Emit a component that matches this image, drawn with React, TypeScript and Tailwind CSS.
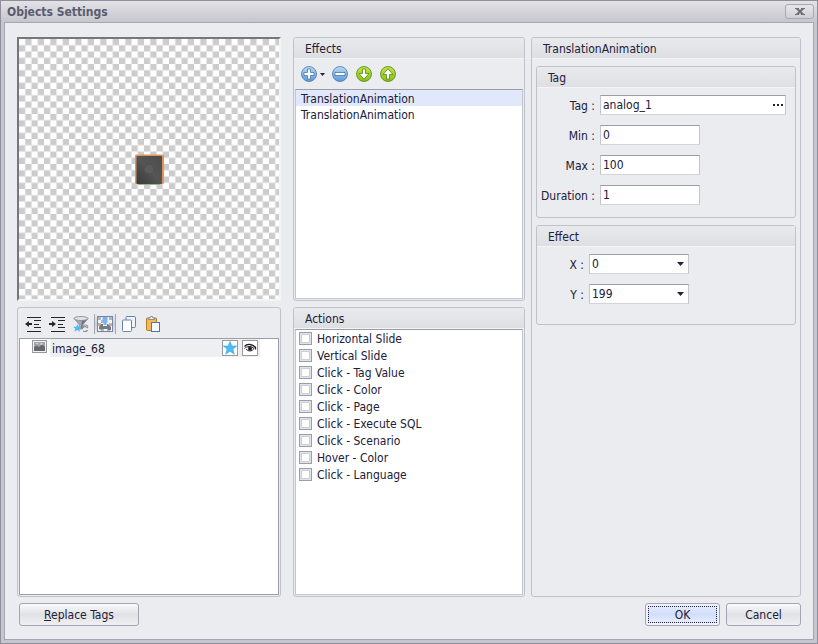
import { useState } from "react";
import type { ReactNode } from "react";

const ACTIONS = [
  "Horizontal Slide",
  "Vertical Slide",
  "Click - Tag Value",
  "Click - Color",
  "Click - Page",
  "Click - Execute SQL",
  "Click - Scenario",
  "Hover - Color",
  "Click - Language",
];

const EFFECTS = ["TranslationAnimation", "TranslationAnimation"];

const INPUT =
  "h-5 rounded-none border border-[#c4c6ce] border-t-[#9b9da9] border-b-[#d3d4da] bg-white pl-0.5 outline-none";

export default function App() {
  const [selected, setSelected] = useState(0);

  return (
    <div className="flex min-h-screen flex-col border border-[#8f8e9d] bg-[#c6c6cf] font-['DejaVu_Sans_Condensed','DejaVu_Sans',sans-serif] text-[12px] leading-4 text-[#20203a]">
      <header className="flex h-[21px] items-center justify-between bg-linear-to-b from-[#e2e2e7] to-[#c6c6cd] pr-[3px] pl-1.5">
        <h1 className="font-bold text-[#5b5b6e]">Objects Settings</h1>
        <button
          type="button"
          aria-label="Close"
          className="flex h-[15px] w-[29px] items-center justify-center rounded-[3px] border border-[#a9a9b6] bg-linear-to-b from-[#e6e6ea] to-[#cfcfd6]"
        >
          <svg width="10" height="7" viewBox="0 0 10 7" fill="#6d6d7d">
            <path d="M0 0h4v1l1 1 1-1V0h4v1H9L6.500 3.500 9 6h1v1H6V6L5 5 4 6v1H0V6h1l2.500-2.500L1 1H0z" />
          </svg>
        </button>
      </header>

      <main className="mx-[3px] mb-[3px] flex flex-1 flex-col border border-[#a5a5b3] bg-[#ebecef] px-3 pt-3.5 pb-[13px]">
        <div className="flex flex-1">
          <div className="flex w-66 shrink-0 flex-col gap-1.5">
            <Preview />
            <ObjectTree />
          </div>

          <div className="ml-3 flex w-58 shrink-0 flex-col gap-1.5">
            <Panel title="Effects" className="flex h-66 flex-col">
              <div className="flex h-[30px] shrink-0 items-center pl-[7px]">
                <button type="button" aria-label="Add effect" className="flex items-center gap-[3px]">
                  <RoundIcon tone="blue">
                    <path d="M6.500 3h3v3.500H13v3H9.500V13h-3V9.500H3v-3h3.500z" />
                  </RoundIcon>
                  <Caret />
                </button>
                <button type="button" aria-label="Remove effect" className="ml-[7px]">
                  <RoundIcon tone="blue">
                    <path d="M3 6.500h10v3H3z" />
                  </RoundIcon>
                </button>
                <button type="button" aria-label="Move down" className="ml-2">
                  <RoundIcon tone="green">
                    <path d="M6.500 3h3v4.500H13L8 13.200 3 7.500h3.500z" />
                  </RoundIcon>
                </button>
                <button type="button" aria-label="Move up" className="ml-2">
                  <RoundIcon tone="green">
                    <path d="M6.500 13h3V8.500H13L8 2.800 3 8.500h3.500z" />
                  </RoundIcon>
                </button>
              </div>
              <ul className="mx-px mb-px flex-1 border border-[#c4c6ce] border-t-[#9b9da9] bg-white">
                {EFFECTS.map((name, i) => (
                  <li key={i}>
                    <button
                      type="button"
                      onClick={() => setSelected(i)}
                      className={`block h-4 w-full pt-px pl-[5px] text-left ${i === selected ? "bg-[#e1e8fb]" : ""}`}
                    >
                      {name}
                    </button>
                  </li>
                ))}
              </ul>
            </Panel>

            <Panel title="Actions" className="flex flex-1 flex-col">
              <ul className="mx-px mb-px flex-1 border border-[#c4c6ce] border-t-[#9b9da9] bg-white pl-[3px]">
                {ACTIONS.map((name) => (
                  <li key={name}>
                    <label className="flex h-[17px] items-center gap-[5px]">
                      <input
                        type="checkbox"
                        className="size-[13px] appearance-none border border-[#9b9da9] bg-white shadow-[inset_0_0_0_1px_#e3e4e9,inset_0_0_0_2px_#cdced8] checked:bg-[#5b5b6e]"
                      />
                      {name}
                    </label>
                  </li>
                ))}
              </ul>
            </Panel>
          </div>

          <Panel title="TranslationAnimation" className="ml-1.5 min-w-0 flex-1">
            <div className="flex flex-col gap-[7px] px-1 pt-[7px]">
              <Panel title="Tag" className="h-[152px]">
                <div className="flex flex-col gap-2.5 pt-[7px] pr-[9px] pl-1">
                  <Field id="tag" label="Tag :">
                    <div className="relative flex-1">
                      <input id="tag" defaultValue="analog_1" className={`${INPUT} w-full`} />
                      <button
                        type="button"
                        aria-label="Browse tags"
                        className="absolute inset-y-0 right-[3px] flex items-center"
                      >
                        <svg width="10" height="2" viewBox="0 0 10 2" fill="#20203a">
                          <path d="M0 0h2v2H0zM4 0h2v2H4zM8 0h2v2H8z" />
                        </svg>
                      </button>
                    </div>
                  </Field>
                  <Field id="min" label="Min :">
                    <input id="min" defaultValue="0" className={`${INPUT} w-25`} />
                  </Field>
                  <Field id="max" label="Max :">
                    <input id="max" defaultValue="100" className={`${INPUT} w-25`} />
                  </Field>
                  <Field id="duration" label="Duration :">
                    <input id="duration" defaultValue="1" className={`${INPUT} w-25`} />
                  </Field>
                </div>
              </Panel>

              <Panel title="Effect" className="h-[100px]">
                <div className="flex flex-col gap-2.5 pt-[7px]">
                  <AxisSelect id="x" label="X :" value="0" />
                  <AxisSelect id="y" label="Y :" value="199" />
                </div>
              </Panel>
            </div>
          </Panel>
        </div>

        <footer className="mt-1.5 flex gap-1.5 pl-0.5">
          <PushButton className="mr-auto w-30">
            <span className="underline">R</span>eplace Tags
          </PushButton>
          <button
            type="button"
            className="h-[23px] w-[75px] rounded-[3px] border border-[#a3a5b1] bg-[#eef2fd] p-0.5"
          >
            <span className="flex h-full items-center justify-center border border-dotted border-[#20203a] bg-linear-to-b from-[#e2e9fc] via-[#d2defb] to-[#e6edfd]">
              OK
            </span>
          </button>
          <PushButton className="w-[75px]">Cancel</PushButton>
        </footer>
      </main>
    </div>
  );
}

function Panel({
  title,
  className,
  children,
}: {
  title: string;
  className: string;
  children: ReactNode;
}) {
  return (
    <section className={`rounded-[3px] border border-[#c0c2cb] ${className}`}>
      <h2 className="h-[21px] shrink-0 rounded-t-[2px] border-b border-[#f4f4f6] bg-linear-to-b from-[#e9eaed] to-[#dedfe3] pt-[3px] pl-[11px]">
        {title}
      </h2>
      {children}
    </section>
  );
}

function Field({ id, label, children }: { id: string; label: string; children: ReactNode }) {
  return (
    <div className="flex items-center gap-[5px]">
      <label htmlFor={id} className="w-[54px] shrink-0 pt-0.5 text-right whitespace-nowrap">
        {label}
      </label>
      {children}
    </div>
  );
}

function AxisSelect({ id, label, value }: { id: string; label: string; value: string }) {
  return (
    <div className="flex items-center gap-[5px]">
      <label htmlFor={id} className="w-[47px] pt-0.5 text-right">
        {label}
      </label>
      <div className="relative w-25">
        <select id={id} defaultValue={value} className={`${INPUT} w-full appearance-none`}>
          <option>{value}</option>
        </select>
        <span className="pointer-events-none absolute inset-y-0 right-[5px] flex items-center">
          <Caret wide />
        </span>
      </div>
    </div>
  );
}

function PushButton({ className, children }: { className: string; children: ReactNode }) {
  return (
    <button
      type="button"
      className={`h-[23px] rounded-[3px] border border-[#a3a5b1] bg-linear-to-b from-[#fafafb] via-[#e0e2e6] to-[#f0f0f3] ${className}`}
    >
      {children}
    </button>
  );
}

/** Transparent canvas with the selected object in the middle. */
function Preview() {
  return (
    <div className="h-66 shrink-0 border-2 border-t-[#77777a] border-r-[#f4f4f6] border-b-[#f4f4f6] border-l-[#77777a]">
      <svg className="block size-full" viewBox="0 0 260 260" preserveAspectRatio="xMinYMin slice">
        <defs>
          <pattern id="checker" width="12.5" height="12.5" patternUnits="userSpaceOnUse">
            <rect width="12.5" height="12.5" fill="#fff" />
            <path d="M6.25 0h6.25v6.25H6.25zM0 6.25h6.25v6.25H0z" fill="#ccc" />
          </pattern>
          <linearGradient id="knob" x1="1" y1="0" x2="0" y2="1">
            <stop offset="0" stopColor="#4c4c4c" />
            <stop offset=".5" stopColor="#555" />
            <stop offset="1" stopColor="#393939" />
          </linearGradient>
        </defs>
        <rect width="260" height="260" fill="url(#checker)" />
        <rect x="116" y="115.5" width="29" height="29.5" rx="1.5" fill="#dd9560" />
        <path d="M119 145.500h22" stroke="#8dbb83" />
        <rect x="117.500" y="117" width="25.500" height="28" rx="1" fill="url(#knob)" />
        <circle cx="130" cy="130" r="5" fill="#5b5b5b" stroke="#4b4b4b" strokeWidth=".7" />
      </svg>
    </div>
  );
}

function ObjectTree() {
  return (
    <section className="flex flex-1 flex-col rounded-[3px] border border-[#c0c2cb]">
      <div className="flex h-[30px] shrink-0 items-center gap-2 pt-0.5 pl-[7px]">
        <button type="button" aria-label="Outdent">
          <IndentIcon arrow="M0 8 4 5v2h3v2H4v2z" />
        </button>
        <button type="button" aria-label="Indent">
          <IndentIcon arrow="M7 8 3 5v2H0v2h3v2z" />
        </button>
        <button type="button" aria-label="Filter">
          <FilterIcon />
        </button>
        <button
          type="button"
          aria-label="Show background"
          aria-pressed="true"
          className="-mx-[3px] border-x border-[#a3a5b1] bg-linear-to-b from-[#ebecef] via-[#cfd0d7] to-[#ebecef] px-0.5 py-0.5"
        >
          <CanvasIcon />
        </button>
        <button type="button" aria-label="Copy">
          <CopyIcon />
        </button>
        <button type="button" aria-label="Paste">
          <PasteIcon />
        </button>
      </div>
      <div className="mx-px mb-px flex-1 border border-[#9b9da9] bg-white">
        <div className="flex h-[18px] items-center pr-[18px] pl-3">
          <ImageIcon />
          <div className="ml-0.5 flex h-full flex-1 items-center bg-[#eeeff1] pr-0.5 pl-0.5">
            <span className="mr-auto pt-0.5">image_68</span>
            <button type="button" aria-label="Favourite" className="size-4 border border-[#9a9a9e] bg-white">
              <svg width="14" height="14" viewBox="0 0 14 14">
                <path
                  d="M7 .5 8.900 5H13.700L9.900 8.100 11.300 13.200 7 10.300 2.700 13.200 4.100 8.100.3 5H5.100z"
                  fill="#4cbcf0"
                  stroke="#3aa5dc"
                  strokeWidth=".6"
                />
              </svg>
            </button>
            <button type="button" aria-label="Toggle visibility" className="ml-1 size-4 border border-[#9a9a9e] bg-white">
              <svg width="14" height="14" viewBox="0 0 14 14" fill="none" stroke="#1c1c1c">
                <path d="M1.500 5.500C4 2.500 9.500 2.800 12.500 6.500V8.500" strokeWidth="1.300" />
                <path d="M1.500 7.500C4 5 8.500 4.800 11 7.500 9 10.800 5 10.500 3 8" strokeWidth="1" />
                <circle cx="7" cy="7.500" r="1.600" fill="#1c1c1c" />
              </svg>
            </button>
          </div>
        </div>
      </div>
    </section>
  );
}

function Caret({ wide }: { wide?: boolean }) {
  return (
    <svg width={wide ? 7 : 5} height={wide ? 4 : 3} viewBox="0 0 7 4" fill="#20203a">
      <path d="M0 0h7L3.500 4z" />
    </svg>
  );
}

function RoundIcon({ tone, children }: { tone: "blue" | "green"; children: ReactNode }) {
  const [light, dark, edge] =
    tone === "blue" ? ["#b9dbf6", "#5a9ad6", "#4a76ac"] : ["#c5e34a", "#86c010", "#54850f"];
  return (
    <svg width="16" height="16" viewBox="0 0 16 16">
      <defs>
        <linearGradient id={tone} x1="0" y1="0" x2="0" y2="1">
          <stop offset="0" stopColor={light} />
          <stop offset="1" stopColor={dark} />
        </linearGradient>
      </defs>
      <circle cx="8" cy="8" r="7.500" fill={`url(#${tone})`} stroke={edge} strokeWidth=".8" />
      <g fill="#fff" stroke={edge} strokeWidth=".8">
        {children}
      </g>
    </svg>
  );
}

function IndentIcon({ arrow }: { arrow: string }) {
  return (
    <svg width="16" height="16" viewBox="0 0 16 16" fill="#262626">
      <path d="M2 1h14v1H2zM9 4h7v1H9zM9 8h5v1H9zM9 11h7v1H9zM2 15h14v1H2z" />
      <path d={arrow} />
    </svg>
  );
}

function FilterIcon() {
  return (
    <svg width="16" height="16" viewBox="0 0 16 16">
      <path d="M1 2.500 6.500 9v4h3V9L15 2.500z" fill="#a3a9b4" stroke="#777d88" strokeWidth=".6" />
      <path d="M9 4 8 12.500h1.500V9L15 2.500z" fill="#717783" />
      <ellipse cx="8" cy="2.500" rx="7" ry="2" fill="#dfe3e9" stroke="#7d8490" strokeWidth=".8" />
      <path d="M10 10.500c1-2 4-2 5 0M9.500 12c2-2 4-1.500 5.500 0M10 15c1.500.8 3.500.6 4.500-.8" fill="none" stroke="#8b8e94" strokeWidth="1.200" />
      <path d="M4.500 8 5.700 10.800H8L6.200 12.600 7 15.700 4.300 14 1.500 15.700 2.300 12.600 0 10.800H3.300z" fill="#4cbcf0" />
    </svg>
  );
}

function CanvasIcon() {
  return (
    <svg width="16" height="16" viewBox="0 0 16 16">
      <rect x=".5" y=".5" width="15" height="15" fill="#f4f5f7" stroke="#7584ad" />
      <path d="M1 1h3v3H1zM4 4h3v3H4zM1 7h3v3H1zM12 1h3v3h-3zM12 7h3v3h-3zM4 12h3v3H4zM10 12h3v3h-3z" fill="#b4b6ba" />
      <path d="M2 13v-2l2-3h2v2h4V8h1l3 3v3h-3v-1H5v1z" fill="#777a80" />
      <path d="M5.500 1h5v6h-1v2h-3V7h-1z" fill="#7db2ee" />
    </svg>
  );
}

function CopyIcon() {
  return (
    <svg width="16" height="16" viewBox="0 0 16 16" stroke="#6680b8">
      <rect x="5" y=".5" width="9.500" height="11" rx="1" fill="#eef3fc" />
      <rect x="1.500" y="4" width="9" height="11.500" rx="1" fill="#fff" />
    </svg>
  );
}

function PasteIcon() {
  return (
    <svg width="16" height="16" viewBox="0 0 16 16">
      <rect x="1.500" y="2" width="10" height="12.500" rx="1" fill="#eebb5c" stroke="#b57c24" />
      <path d="M3.500 3.500V2H5l.5-1.500h2L8 2h1.500v1.500z" fill="#e8e9ec" stroke="#7b7f88" strokeWidth=".8" />
      <rect x="6.500" y="6.500" width="8" height="9" fill="#f6f9ff" stroke="#5573b0" />
    </svg>
  );
}

function ImageIcon() {
  return (
    <svg width="16" height="14" viewBox="0 0 16 14" className="mb-0.5">
      <rect x=".5" y=".5" width="14" height="12" fill="#f2f2f2" stroke="#96989c" />
      <path d="M2 2h11v9H2z" fill="#a3a5a8" />
      <path d="M2 7 5 5.500l2 1.500 3-3 3 3v4H2z" fill="#66686c" />
      <path d="M8.500 3h2v2h-2zM4 3h2v1H4z" fill="#d5d6d8" />
    </svg>
  );
}
